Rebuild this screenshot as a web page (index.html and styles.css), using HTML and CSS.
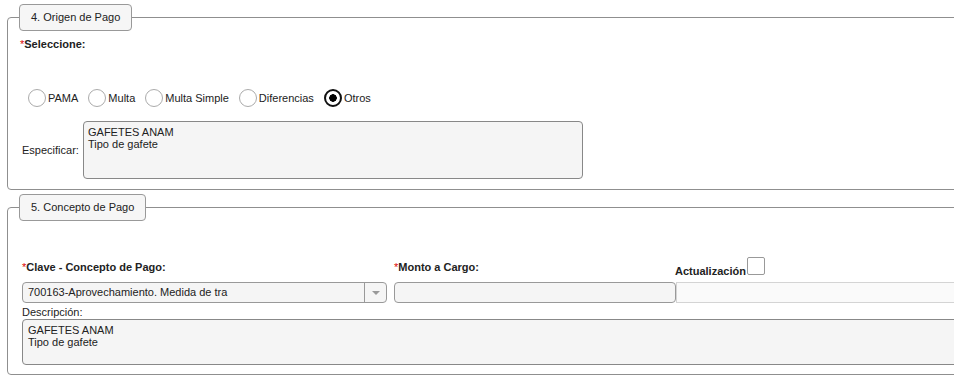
FILE: index.html
```html
<!DOCTYPE html>
<html lang="es">
  <head>
    <meta charset="UTF-8" />
    <meta name="viewport" content="width=device-width, initial-scale=1.0" />
    <link rel="stylesheet" href="styles.css">
  </head>
  <body>
    <!-- 4. Origen de Pago -->
    <fieldset class="panel panel-origen">
      <legend class="panel-title">4. Origen de Pago</legend>
      <p class="req-label"><span class="req">*</span>Seleccione:</p>
      <div class="radio-row">
        <label class="radio-opt"><input type="radio" name="origen" />PAMA</label>
        <label class="radio-opt"><input type="radio" name="origen" />Multa</label>
        <label class="radio-opt"><input type="radio" name="origen" />Multa Simple</label>
        <label class="radio-opt"><input type="radio" name="origen" />Diferencias</label>
        <label class="radio-opt"><input type="radio" name="origen" checked />Otros</label>
      </div>
      <div class="spec-row">
        <label class="spec-label">Especificar:</label>
        <textarea class="field-area spec-area" readonly>GAFETES ANAM
Tipo de gafete</textarea>
      </div>
    </fieldset>

    <!-- 5. Concepto de Pago -->
    <fieldset class="panel panel-concepto">
      <legend class="panel-title">5. Concepto de Pago</legend>
      <div class="concepto-grid">
        <div class="req-label grid-label"><span class="req">*</span>Clave - Concepto de Pago:</div>
        <div class="req-label grid-label"><span class="req">*</span>Monto a Cargo:</div>
        <div class="act-label">
          <span class="act-text">Actualización</span><input type="checkbox" class="act-check" />
        </div>
        <div class="select-box">
          <span class="select-value">700163-Aprovechamiento. Medida de tra</span>
          <span class="select-arrow"></span>
        </div>
        <input type="text" class="field-input" readonly />
        <input type="text" class="field-input field-soft" readonly />
      </div>
      <div class="desc-label">Descripción:</div>
      <textarea class="field-area desc-area" readonly>GAFETES ANAM
Tipo de gafete</textarea>
    </fieldset>
  </body>
</html>
```

FILE: styles.css
```css
html {
  overflow: hidden;
}
body {
  margin: 0;
  font-family: "Liberation Sans", Arial, sans-serif;
  font-size: 11px;
  color: #222;
  background: #fff;
}
.panel {
  width: 1000px;
  margin: 4px 0 0 7px;
  padding: 0 0 10px 12px;
  border: 1px solid #8f8f8f;
  border-radius: 4px;
  box-sizing: border-box;
}
.panel-title {
  margin-left: -1px;
  padding: 5px 11px;
  line-height: 15px;
  border: 1px solid #999;
  border-radius: 4px;
  background: #f6f6f6;
  color: #222;
}
.req-label {
  margin: 6px 0 0;
  line-height: 14px;
  font-weight: bold;
}
.req {
  color: #d00;
  font-weight: normal;
}
/* radio options */
.radio-row {
  display: flex;
  align-items: center;
  gap: 10px;
  margin-top: 38px;
  padding-left: 8px;
}
.radio-opt {
  display: flex;
  align-items: center;
  line-height: 14px;
}
.radio-opt input {
  appearance: none;
  -webkit-appearance: none;
  width: 18px;
  height: 18px;
  margin: 0 2px 0 0;
  border: 1px solid #ababab;
  border-radius: 50%;
  background: #fff;
  box-sizing: border-box;
}
.radio-opt input:checked {
  border: 2px solid #111;
  background: radial-gradient(circle, #000 0 3.5px, transparent 4px);
}
.spec-row {
  display: flex;
  align-items: center;
  margin-top: 14px;
  padding-left: 2px;
}
.spec-label {
  width: 61px;
  line-height: 14px;
}
.field-area {
  display: block;
  margin: 0;
  padding: 4px 4px;
  font-family: "Liberation Sans", Arial, sans-serif;
  font-size: 11px;
  line-height: 12px;
  color: #222;
  background: #f5f5f5;
  border: 1px solid #888;
  border-radius: 4px;
  box-sizing: border-box;
  resize: none;
  overflow: hidden;
}
.spec-area {
  width: 500px;
  height: 58px;
}
/* concepto section */
.panel-concepto {
  padding-bottom: 9px;
}
.concepto-grid {
  display: grid;
  grid-template-columns: 372px 282px 300px;
  grid-template-rows: 25px 21px;
  margin-top: 36px;
  padding-left: 2px;
}
.grid-label {
  align-self: end;
  margin: 0 0 8px;
}
.act-label {
  display: flex;
  align-items: flex-end;
  margin-left: -1px;
}
.act-text {
  font-weight: bold;
  line-height: 14px;
  margin-bottom: 4px;
}
.act-check {
  appearance: none;
  -webkit-appearance: none;
  width: 18px;
  height: 18px;
  margin: 0 0 7px 1px;
  border: 1px solid #999;
  border-radius: 2px;
  background: #fff;
  box-sizing: border-box;
}
.select-box {
  display: flex;
  width: 365px;
  height: 21px;
  border: 1px solid #999;
  border-radius: 4px;
  background: #f5f5f5;
  box-sizing: border-box;
}
.select-value {
  flex: 1;
  padding-left: 5px;
  line-height: 19px;
  white-space: nowrap;
}
.select-arrow {
  position: relative;
  width: 21px;
  border-left: 1px solid #999;
}
.select-arrow::after {
  content: "";
  position: absolute;
  left: 7px;
  top: 8px;
  border-left: 4px solid transparent;
  border-right: 4px solid transparent;
  border-top: 4px solid #999;
}
.field-input {
  width: 282px;
  height: 21px;
  margin: 0;
  padding: 0 5px;
  font: inherit;
  background: #f5f5f5;
  border: 1px solid #999;
  border-radius: 4px;
  box-sizing: border-box;
}
.field-soft {
  width: 300px;
  background: #fafafa;
  border-color: #d4d4d4;
  border-radius: 0;
}
.desc-label {
  margin-top: 2px;
  padding-left: 2px;
  line-height: 14px;
}
.desc-area {
  width: 960px;
  height: 46px;
  margin-left: 2px;
  padding-left: 5px;
}
```
